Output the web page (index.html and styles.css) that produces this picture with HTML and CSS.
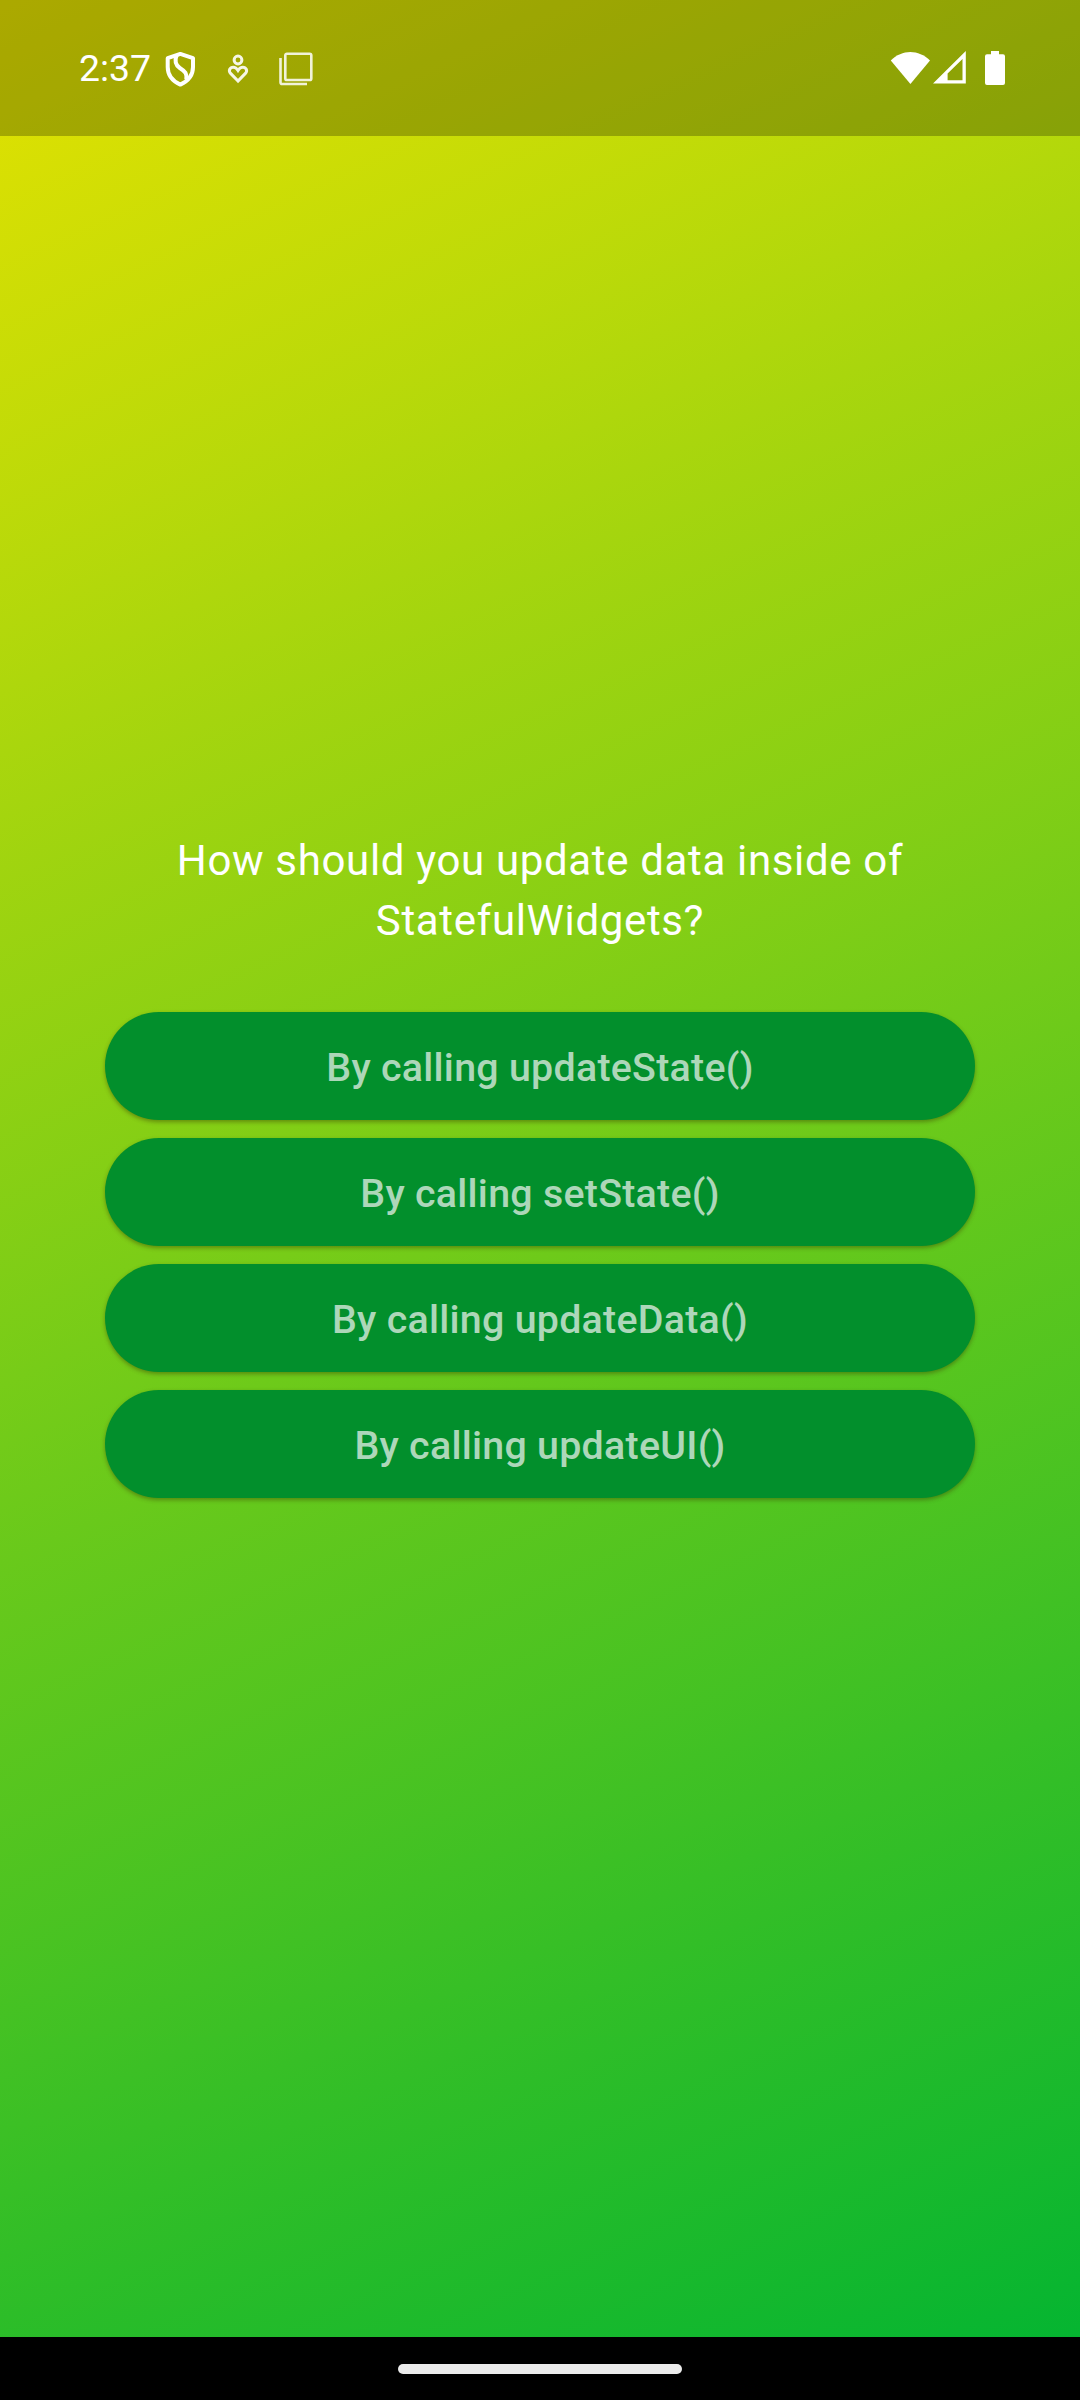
FILE: index.html
```html
<!DOCTYPE html>
<html lang="en">
<head>
<meta charset="utf-8">
<title>Quiz</title>
<link rel="stylesheet" href="styles.css">
</head>
<body>
<div class="screen">
  <header class="status-bar">
    <span class="clock">2:37</span>
    <svg class="icon shield" width="32" height="38" viewBox="0 0 32 38" fill="none" stroke="#fff" stroke-width="4" stroke-linejoin="round">
      <path d="M16.300 3.900 L29 8.200 V17 C29 25 24.300 31 16.300 34.600 C8.300 31 3.700 25 3.700 17 V8.200 Z"/>
      <path d="M12.800 4.800 C10.300 11 11.300 15 15.800 18 C21.300 21.500 23.300 23.500 22.300 29.500"/>
    </svg>
    <svg class="icon wellbeing" width="24" height="32" viewBox="0 0 24 32" fill="none" stroke="#fff" stroke-opacity=".9" stroke-width="3" stroke-linejoin="miter">
      <circle cx="12" cy="7" r="3.900"/>
      <path d="M12 28 L4.600 20.400 C2 17.600 4 14.200 7.200 14.200 C9.600 14.200 11 15.800 12 17.400 C13 15.800 14.400 14.200 16.800 14.200 C20 14.200 22 17.600 19.400 20.400 Z"/>
    </svg>
    <svg class="icon pages" width="34" height="34" viewBox="0 0 34 34" fill="none" stroke="#fff" stroke-opacity=".85" stroke-width="2.600">
      <rect x="6.300" y="1.700" width="26" height="26.300" rx="1.600"/>
      <path d="M1.500 6 V30.200 Q1.500 32 3.200 32 H28"/>
    </svg>
    <svg class="icon wifi" width="40" height="34" viewBox="0 0 40 34" fill="#fff">
      <path d="M.8 9.500 C12 -2 28.600 -2 40 9.500 L20.400 33 Z"/>
    </svg>
    <svg class="icon signal" width="33" height="33" viewBox="0 0 33 33" fill="#fff" fill-rule="evenodd">
      <path d="M0 32.500 L32.800 0 V32.500 Z M14.600 22.500 V29.300 H29.500 V8 Z"/>
    </svg>
    <svg class="icon battery" width="20" height="34" viewBox="0 0 20 34" fill="#fff">
      <path d="M6 0 H14 V3.200 H18 Q20 3.200 20 5.200 V32 Q20 34 18 34 H2 Q0 34 0 32 V5.200 Q0 3.200 2 3.200 H6 Z"/>
    </svg>
  </header>
  <main class="quiz">
    <h1 class="question">How should you update data inside of StatefulWidgets?</h1>
    <div class="answers">
      <button class="answer" type="button">By calling updateState()</button>
      <button class="answer" type="button">By calling setState()</button>
      <button class="answer" type="button">By calling updateData()</button>
      <button class="answer" type="button">By calling updateUI()</button>
    </div>
  </main>
  <footer class="nav-bar"><div class="handle"></div></footer>
</div>
</body>
</html>
```
FILE: styles.css
```css
* { box-sizing: border-box; }
body { margin: 0; font-family: Roboto, sans-serif; }
.screen {
  display: flex;
  flex-direction: column;
  width: 1080px;
  height: 2400px;
  background: linear-gradient(155.77deg, #e5e200 0%, #00b432 100%);
}
.status-bar {
  display: flex;
  align-items: flex-start;
  flex: none;
  height: 136px;
  padding-left: 79px;
  background: rgba(0, 0, 0, .25);
}
.clock {
  width: 86px;
  margin-top: 46px;
  color: #fff;
  font-size: 37.4px;
  line-height: 44px;
  white-space: nowrap;
}
.icon { display: block; flex: none; }
.shield { margin: 50px 0 0 -1px; }
.wellbeing { margin: 53px 0 0 30px; }
.pages { margin: 52px 0 0 29px; }
.wifi { margin: 51px 0 0 auto; }
.signal { margin: 51px 0 0 3px; }
.battery { margin: 51px 75px 0 19px; }
.quiz {
  flex: 1;
  display: flex;
  flex-direction: column;
  padding: 695px 105px 0;
}
.question {
  margin: 0;
  color: #fff;
  font-size: 42px;
  font-weight: 400;
  line-height: 60px;
  letter-spacing: .656px;
  text-align: center;
}
.answers {
  display: flex;
  flex-direction: column;
  gap: 18px;
  margin-top: 61.4px;
}
.answer {
  height: 108px;
  padding: 4px 0 0;
  border: 0;
  border-radius: 54px;
  background: #028f2c;
  color: #add7b9;
  font: 500 39.375px/46px Roboto, sans-serif;
  letter-spacing: .2625px;
  box-shadow: 0 2px 4px rgba(60, 60, 0, .45);
}
.nav-bar {
  flex: none;
  height: 63px;
  padding-top: 27px;
  background: #000;
}
.handle {
  width: 284px;
  height: 10px;
  margin: 0 auto;
  border-radius: 5px;
  background: #ebebeb;
}
```
